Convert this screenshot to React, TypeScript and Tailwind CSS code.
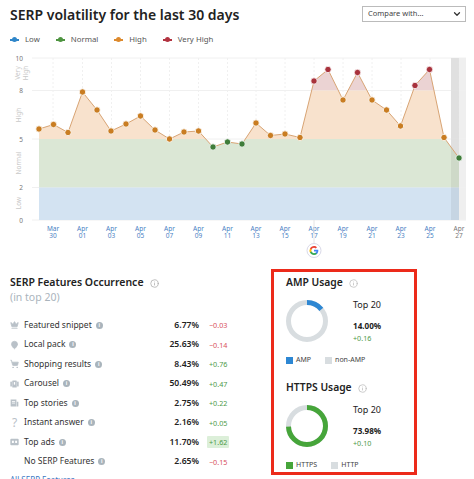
import { Crown, MapPin, ShoppingCart, ChevronDown, Info } from "lucide-react";

const FONT = "font-['Noto_Sans','Open_Sans',sans-serif]";

// [x, y] in chart pixels, one point per day
const points: [number, number][] = [
  [39, 129], [53.5, 124.5], [68, 132.5], [82.5, 92], [97, 110], [111, 131], [126, 124], [140.5, 116],
  [155, 130], [169.5, 139], [184, 132], [198.5, 131], [213, 147], [227.5, 142], [242, 144], [256, 123],
  [270.5, 135.5], [285, 134], [300, 137.5], [314, 81], [328, 69.5], [343, 100], [357.5, 72.5], [372, 100],
  [386.5, 110], [400.5, 126], [415, 85.5], [429.5, 69.5], [444, 137.5], [459, 158],
];

const ticks = [
  ["Mar", "30", 53], ["Apr", "01", 82.5], ["Apr", "03", 111.5], ["Apr", "05", 140.5], ["Apr", "07", 169.5],
  ["Apr", "09", 198.5], ["Apr", "11", 227.5], ["Apr", "13", 256], ["Apr", "15", 285], ["Apr", "17", 314],
  ["Apr", "19", 343], ["Apr", "21", 372], ["Apr", "23", 401], ["Apr", "25", 430], ["Apr", "27", 459],
] as const;

const legend = [
  ["Low", "#2f86c9"],
  ["Normal", "#4e9440"],
  ["High", "#dd8a2d"],
  ["Very High", "#b23340"],
];

const dotColor = (y: number) => {
  if (y < 90.5) return "#a8323c";
  if (y < 139.5) return "#c97d22";
  return "#3f7d3a";
};

const Chart = () => {
  const line = points.map((p) => p.join(",")).join(" ");
  const area = `39,220 ${line} 459,220`;
  return (
    <svg width={474} height={222} viewBox="0 50 474 222" className="mt-[3px] block">
      <defs>
        <clipPath id="under">
          <polygon points={area} />
        </clipPath>
      </defs>
      <rect x={451} y={58} width={15} height={162} fill="#efefef" />
      {[58, 90.5, 139, 187.5, 220].map((y) => (
        <line key={y} x1={32} x2={466} y1={y} y2={y} stroke="#f0f0f0" />
      ))}
      {ticks.map((t) => (
        <line key={t[2]} x1={t[2]} x2={t[2]} y1={58} y2={220} stroke="#f0f0f0" strokeDasharray="2 2" />
      ))}
      <g clipPath="url(#under)">
        <rect x={39} y={58} width={420} height={32.5} fill="#ebd3d3" />
        <rect x={39} y={90.5} width={420} height={48.5} fill="#f8e2cd" />
        <rect x={39} y={139} width={420} height={48.5} fill="#dbe7d5" />
        <rect x={39} y={187.5} width={420} height={32.5} fill="#d3e3f2" />
      </g>
      <rect x={451} y={58} width={8} height={162} fill="#000" opacity={0.06} />
      <polyline points={line} fill="none" stroke="#d8a474" strokeWidth={1} />
      {points.map(([x, y]) => (
        <circle key={x} cx={x} cy={y} r={3.2} fill={dotColor(y)} stroke="#fff" strokeWidth={0.8} />
      ))}
      {[["10", 58], ["8", 90.5], ["5", 139], ["2", 187.5], ["0", 220]].map(([t, y]) => (
        <text key={t} x={23} y={Number(y) + 2.5} textAnchor="end" fontSize={6.5} fill="#777">
          {t}
        </text>
      ))}
      <text transform="translate(21,203) rotate(-90)" textAnchor="middle" fontSize={6.5} fill="#c9c9c9">Low</text>
      <text transform="translate(21,163) rotate(-90)" textAnchor="middle" fontSize={6.5} fill="#c9c9c9">Normal</text>
      <text transform="translate(21,115) rotate(-90)" textAnchor="middle" fontSize={6.5} fill="#c9c9c9">High</text>
      <text transform="translate(20,73) rotate(-90)" textAnchor="middle" fontSize={6.5} fill="#c9c9c9">Very</text>
      <text transform="translate(28,73) rotate(-90)" textAnchor="middle" fontSize={6.5} fill="#c9c9c9">High</text>
      {ticks.map(([m, d, x]) => (
        <text key={x} textAnchor="middle" fontSize={6.5} fill={x === 459 ? "#777" : "#4a7fc4"}>
          <tspan x={x} y={231}>{m}</tspan>
          <tspan x={x} y={238}>{d}</tspan>
        </text>
      ))}
      <line x1={314} x2={314} y1={220} y2={243} stroke="#e4e4e4" />
      <circle cx={314} cy={250.5} r={7} fill="#fff" stroke="#d9d9e8" />
      <g transform="translate(309.5,246) scale(0.375)">
        <path d="M23.5 12.3c0-.8-.1-1.6-.2-2.3H12v4.5h6.5c-.3 1.5-1.1 2.7-2.4 3.6v3h3.9c2.3-2.1 3.5-5.2 3.5-8.8z" fill="#4285F4" />
        <path d="M12 24c3.2 0 6-1.1 8-2.9l-3.9-3c-1.1.7-2.5 1.2-4.1 1.2-3.1 0-5.8-2.1-6.7-5H1.3v3.1C3.3 21.3 7.3 24 12 24z" fill="#34A853" />
        <path d="M5.3 14.3c-.5-1.5-.5-3.1 0-4.6V6.6h-4a12 12 0 0 0 0 10.8l4-3.1z" fill="#FBBC05" />
        <path d="M12 4.8c1.8 0 3.4.6 4.6 1.8l3.4-3.4C18 1.2 15.2 0 12 0 7.3 0 3.3 2.7 1.3 6.6l4 3.1c.9-2.8 3.6-4.9 6.7-4.9z" fill="#EA4335" />
      </g>
    </svg>
  );
};

const CarouselIcon = () => (
  <svg width={10} height={10} viewBox="0 0 14 14" fill="#b9c1c8">
    <rect x={0.5} y={3} width={2.5} height={8} rx={1} />
    <rect x={11} y={3} width={2.5} height={8} rx={1} />
    <rect x={3.5} y={1.5} width={7} height={11} rx={1} />
    <rect x={6} y={4} width={2} height={4} fill="#fff" />
  </svg>
);

const StoriesIcon = () => (
  <svg width={10} height={10} viewBox="0 0 14 14" fill="#b9c1c8">
    <path d="M1 1.5h9v11H2a1 1 0 0 1-1-1z" />
    <path d="M10.5 5h2.5v6.5a1 1 0 0 1-1 1h-1.5z" />
    <rect x={3} y={4} width={5} height={1.2} fill="#fff" />
    <rect x={3} y={6.5} width={5} height={1.2} fill="#fff" />
  </svg>
);

const AdsIcon = () => (
  <svg width={10} height={10} viewBox="0 0 14 14" fill="#b9c1c8">
    <rect x={0.5} y={2} width={13} height={10} rx={1.5} />
    <rect x={3} y={5} width={3} height={3.5} fill="#fff" />
    <rect x={8} y={5} width={3} height={3.5} fill="#fff" />
  </svg>
);

const rows = [
  { name: "Featured snippet", value: "6.77%", delta: "−0.03", icon: <Crown size={10} fill="#b9c1c8" stroke="#b9c1c8" /> },
  { name: "Local pack", value: "25.63%", delta: "−0.14", icon: <MapPin size={10} fill="#b9c1c8" stroke="#b9c1c8" /> },
  { name: "Shopping results", value: "8.43%", delta: "+0.76", icon: <ShoppingCart size={10} fill="#b9c1c8" stroke="#b9c1c8" /> },
  { name: "Carousel", value: "50.49%", delta: "+0.47", icon: <CarouselIcon /> },
  { name: "Top stories", value: "2.75%", delta: "+0.22", icon: <StoriesIcon /> },
  { name: "Instant answer", value: "2.16%", delta: "+0.05", icon: <span className="text-[12px] leading-none text-[#b9c1c8]">?</span> },
  { name: "Top ads", value: "11.70%", delta: "+1.62", icon: <AdsIcon />, badge: true },
  { name: "No SERP Features", value: "2.65%", delta: "−0.15", icon: null },
];

const SmallInfo = () => (
  <span className="ml-[4px] flex h-[7px] w-[7px] items-center justify-center rounded-full bg-[#a9b4bc] text-[5px] font-bold leading-none text-white">
    i
  </span>
);

const FeatureRow = ({ row }: { row: (typeof rows)[number] }) => (
  <div className="flex h-[19.5px] items-center">
    <div className="flex w-[9px] justify-center">{row.icon}</div>
    <div className="ml-[5px] flex w-[135px] items-center text-[8.5px] text-[#333]">
      {row.name}
      <SmallInfo />
    </div>
    <div className="w-[40px] text-right text-[8.6px] font-semibold text-[#222]">{row.value}</div>
    <div className="ml-[8px] flex">
      <span
        className={`rounded-[1px] px-[2px] py-[2px] text-[7.2px] leading-[8px] ${row.delta[0] === "+" ? "text-[#4f9a4a]" : "text-[#d8505c]"} ${row.badge ? "bg-[#dcefd9]" : ""}`}
      >
        {row.delta}
      </span>
    </div>
  </div>
);

const Usage = ({ title, pct, delta, color, bg, dash, items }: {
  title: string; pct: string; delta: string; color: string; bg: string; dash: number; items: [string, string][];
}) => {
  const c = 2 * Math.PI * 18.5;
  return (
    <div>
      <div className="flex h-[14px] items-center text-[10.3px] font-semibold text-[#222]">
        {title}
        <Info size={9} className="ml-[6px] text-[#bbb]" />
      </div>
      <div className="mt-[9px] flex">
        <svg width={42} height={42} viewBox="0 0 42 42" className="mt-[1px] shrink-0">
          <circle cx={21} cy={21} r={18.5} fill="none" stroke={bg} strokeWidth={5} />
          <circle
            cx={21}
            cy={21}
            r={18.5}
            fill="none"
            stroke={color}
            strokeWidth={5}
            strokeDasharray={`${(dash / 100) * c} ${c}`}
            transform="rotate(-90 21 21)"
          />
        </svg>
        <div className="ml-[25px]">
          <div className="text-[9px] leading-[12px] text-[#222]">Top 20</div>
          <div className="mt-[10px] text-[8.1px] font-bold leading-[10px] text-[#222]">{pct}</div>
          <div className="mt-[2px] text-[7.2px] leading-[10px] text-[#4f9a4a]">{delta}</div>
        </div>
      </div>
      <div className="mt-[12px] flex gap-[14px]">
        {items.map(([label, swatch]) => (
          <div key={label} className="flex h-[10px] items-center text-[7px] text-[#444]">
            <span className="mr-[3px] h-[7px] w-[7px]" style={{ background: swatch }} />
            {label}
          </div>
        ))}
      </div>
    </div>
  );
};

export default function App() {
  return (
    <div className={`relative h-[479px] w-[474px] overflow-hidden bg-white ${FONT}`}>
      <div className="flex items-start justify-between pl-[10px] pr-[8px] pt-[5px]">
        <h1 className="text-[14px] font-semibold leading-[20px] text-[#222]">SERP volatility for the last 30 days</h1>
        <div className="mt-[1px] flex h-[16px] w-[104px] items-center justify-between border border-[#bbb] pl-[5px] pr-[3px] text-[7.5px] text-[#444]">
          Compare with...
          <ChevronDown size={10} strokeWidth={3} className="text-[#333]" />
        </div>
      </div>
      <div className="mt-[7px] flex h-[15px] items-center gap-[16px] pl-[10px] text-[7.8px] text-[#555]">
        {legend.map(([label, color]) => (
          <div key={label} className="flex items-center gap-[6px]">
            <span className="relative h-[2px] w-[9px]" style={{ background: color }}>
              <span className="absolute left-[2px] top-[-1.5px] h-[5px] w-[5px] rounded-full" style={{ background: color }} />
            </span>
            {label}
          </div>
        ))}
      </div>
      <Chart />
      <div className="flex">
        <div className="ml-[10px] w-[261px] pt-[3px]">
          <div className="flex h-[16px] items-center text-[10.5px] font-semibold text-[#222]">
            SERP Features Occurrence
            <Info size={9} className="ml-[6px] text-[#aaa]" />
          </div>
          <div className="text-[10.5px] leading-[12px] text-[#aab4bc]">(in top 20)</div>
          <div className="mt-[12.25px]">
            {rows.map((r) => (
              <FeatureRow key={r.name} row={r} />
            ))}
          </div>
          <div className="mt-[3px] text-[8px] leading-[12px] text-[#3b78c4]">All SERP Features</div>
        </div>
        <div className="mt-[-3px] h-[206px] w-[146px] border-[3px] border-[#ec2a1a] pl-[12px] pt-[4px]">
          <Usage
            title="AMP Usage"
            pct="14.00%"
            delta="+0.16"
            color="#2d87d3"
            bg="#d8dde0"
            dash={14}
            items={[["AMP", "#2d87d3"], ["non-AMP", "#d8dde0"]]}
          />
          <div className="mt-[16px]">
            <Usage
              title="HTTPS Usage"
              pct="73.98%"
              delta="+0.10"
              color="#46a53a"
              bg="#d8dde0"
              dash={73.98}
              items={[["HTTPS", "#46a53a"], ["HTTP", "#d8dde0"]]}
            />
          </div>
        </div>
      </div>
    </div>
  );
}
